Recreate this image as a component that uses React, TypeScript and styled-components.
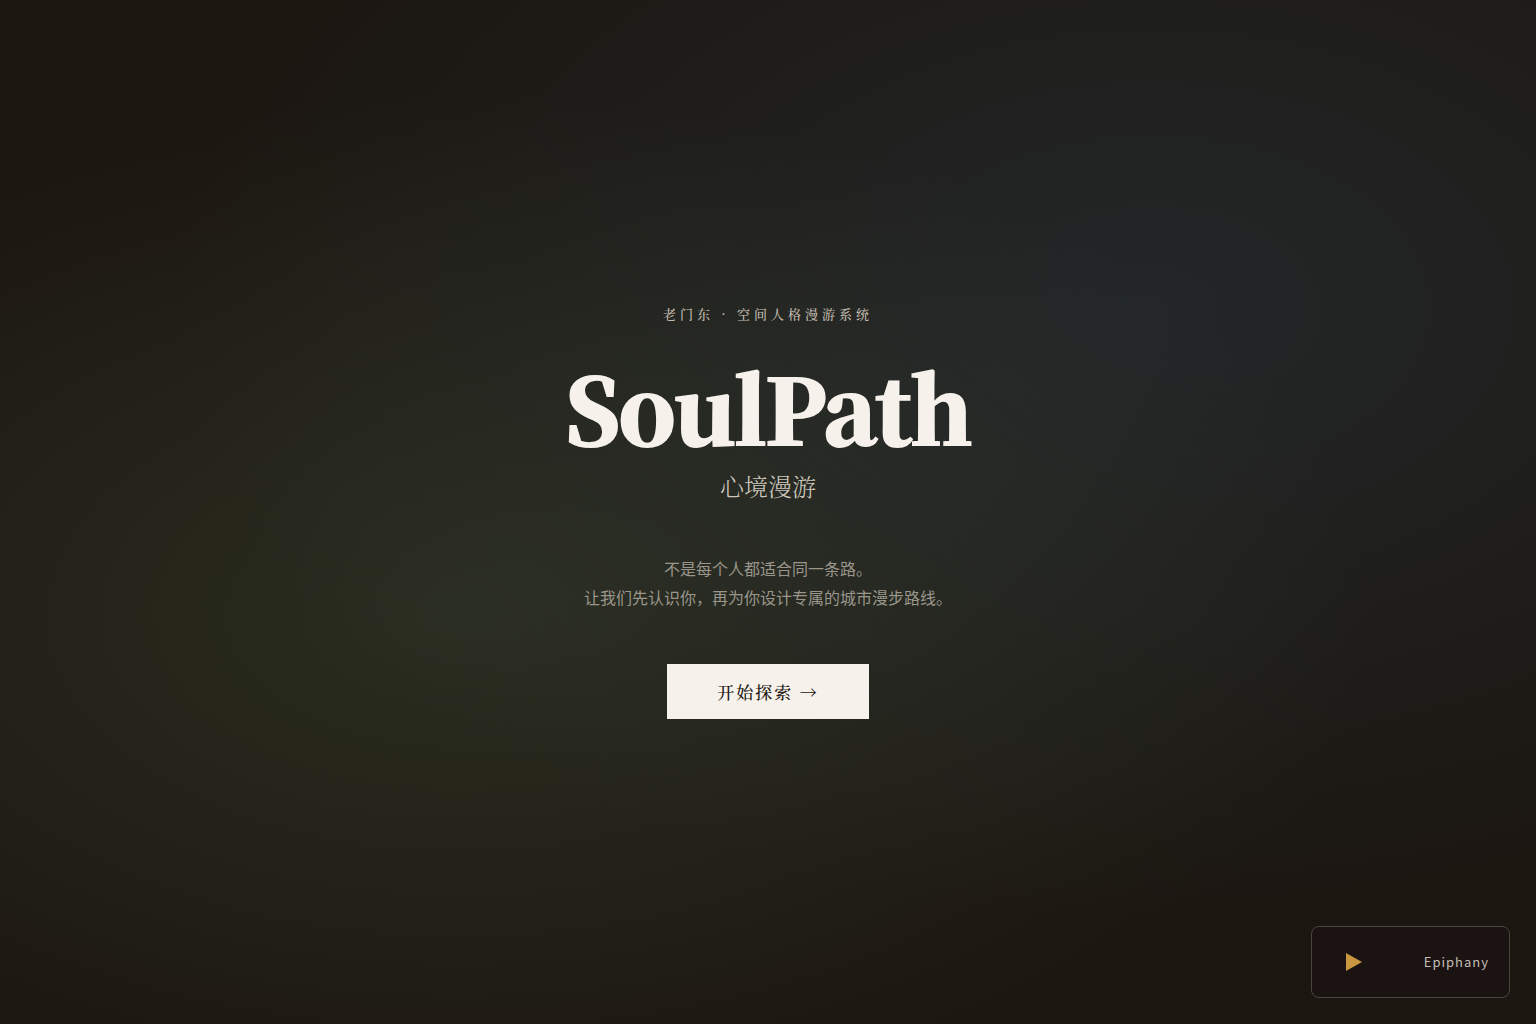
import React from "react";
import styled, { createGlobalStyle } from "styled-components";

const serif = `"Noto Serif CJK SC", "Noto Serif SC", "Liberation Serif", "Noto Sans CJK SC", serif`;
const sans = `"Noto Sans CJK SC", sans-serif`;

const GlobalStyle = createGlobalStyle`
  * { box-sizing: border-box; }
  body { margin: 0; background: #1b1610; }
  h1, p { margin: 0; }
`;

const Page = styled.main`
  min-height: 100vh;
  display: flex;
  flex-direction: column;
  align-items: center;
  justify-content: center;
  text-align: center;
  background:
    radial-gradient(ellipse at 30% 60%, rgba(86, 108, 78, 0.27) 0%, transparent 60%),
    radial-gradient(ellipse at 75% 30%, rgba(58, 86, 110, 0.26) 0%, transparent 60%),
    #1b1610;
`;

const Eyebrow = styled.p`
  font: 500 13px/16px ${serif};
  letter-spacing: 4px;
  color: #c5beb3;
`;

const Title = styled.h1`
  margin-top: 36px;
  font: 900 90px/96px ${serif};
  letter-spacing: -2px;
  color: #f7f1eb;
  -webkit-text-stroke: 2px #f7f1eb;
`;

const Subtitle = styled.p`
  margin-top: 16px;
  font: 300 24px/32px ${serif};
  color: #cdc7bb;
`;

const Intro = styled.p`
  margin-top: 52px;
  font: 400 16px/29px ${sans};
  color: #9a968b;
`;

const StartButton = styled.button`
  margin-top: 52px;
  padding: 14px 50px;
  border: 0;
  background: #f7f1eb;
  color: #1a1510;
  font: 500 17px/27px ${serif};
  letter-spacing: 2px;
`;

const Player = styled.aside`
  position: fixed;
  right: 26px;
  bottom: 26px;
  width: 199px;
  height: 72px;
  padding: 0 20px 0 34px;
  display: flex;
  align-items: center;
  justify-content: space-between;
  border: 1px solid #4b4541;
  border-radius: 8px;
  background: #1a1311;
  color: #c5beb5;
  font: 400 13px/20px ${sans};
  letter-spacing: 1px;
`;

const PlayButton = styled.button`
  display: flex;
  padding: 0;
  border: 0;
  background: none;
`;

export default function App() {
  return (
    <>
      <GlobalStyle />
      <Page lang="zh-CN">
        <Eyebrow>老门东 · 空间人格漫游系统</Eyebrow>
        <Title>SoulPath</Title>
        <Subtitle>心境漫游</Subtitle>
        <Intro>
          不是每个人都适合同一条路。
          <br />
          让我们先认识你，再为你设计专属的城市漫步路线。
        </Intro>
        <StartButton type="button">开始探索 →</StartButton>
      </Page>
      <Player>
        <PlayButton type="button" aria-label="Play">
          <svg width="16" height="18" viewBox="0 0 16 18" fill="#c8973f">
            <path d="M0 0L16 9L0 18Z" />
          </svg>
        </PlayButton>
        <span>Epiphany</span>
      </Player>
    </>
  );
}
